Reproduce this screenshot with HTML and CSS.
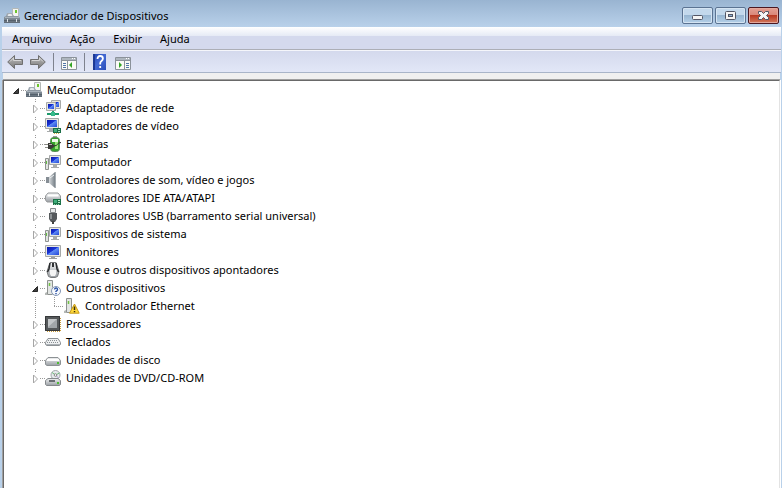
FILE: index.html
```html
<!DOCTYPE html>
<html lang="pt-BR">
<head>
    <meta charset="UTF-8">
    <meta name="viewport" content="width=device-width, initial-scale=1.0">
    <title>Gerenciador de Dispositivos</title>
    <link rel="stylesheet" href="styles.css">
</head>
<body>
    <!-- Icon definitions -->
    <svg class="defs" aria-hidden="true">
        <defs>
            <linearGradient id="metal" x1="0" y1="0" x2="0" y2="1">
                <stop offset="0" stop-color="#f2f3f4"/>
                <stop offset="1" stop-color="#9a9fa4"/>
            </linearGradient>
            <linearGradient id="steel" x1="0" y1="0" x2="0" y2="1">
                <stop offset="0" stop-color="#a9b2bb"/>
                <stop offset="1" stop-color="#5e6a75"/>
            </linearGradient>
            <linearGradient id="screen" x1="0" y1="0" x2="1" y2="1">
                <stop offset="0" stop-color="#0716a8"/>
                <stop offset="0.45" stop-color="#1b36d8"/>
                <stop offset="0.5" stop-color="#5f8cf4"/>
                <stop offset="1" stop-color="#2347d8"/>
            </linearGradient>
            <linearGradient id="arrow" x1="0" y1="0" x2="0" y2="1">
                <stop offset="0" stop-color="#c2c2c2"/>
                <stop offset="1" stop-color="#777"/>
            </linearGradient>
            <linearGradient id="cone" x1="0" y1="0" x2="1" y2="0">
                <stop offset="0" stop-color="#d5d9dc"/>
                <stop offset="1" stop-color="#69737b"/>
            </linearGradient>
            <linearGradient id="help" x1="0" y1="0" x2="1" y2="1">
                <stop offset="0" stop-color="#2145b4"/>
                <stop offset="0.5" stop-color="#4268d3"/>
                <stop offset="1" stop-color="#2a4db9"/>
            </linearGradient>
        </defs>
        <symbol id="i-manager" viewBox="0 0 16 16">
            <path d="M8.500.5h6v10h-6z" fill="#f4f5f2" stroke="#b4b8b6"/>
            <path d="M11 2h2v3h-2z" fill="#6cc52c"/>
            <path d="M3 5h5l2 3h4l2 2v5H0V9l2-1z" fill="url(#steel)"/>
            <path d="M3.500 8l1-2h3l1 2z" fill="#e7eaec"/>
            <path d="M1 9.500h14" stroke="#a9b3bc"/>
            <path d="M0 12.500h16" stroke="#55616c"/>
            <path d="M3 11h1v3H3zM12 11h1v3h-1z" fill="#dfe4e8"/>
        </symbol>
        <symbol id="i-network" viewBox="0 0 16 16">
            <path d="M6.500.5h9v8h-9z" fill="#e6e6e2" stroke="#a8aaa8"/>
            <path d="M8 2h6v5H8z" fill="url(#screen)"/>
            <path d="M1.500 2.500h9v8h-9z" fill="#e6e6e2" stroke="#a8aaa8"/>
            <path d="M3 4h6v5H3z" fill="url(#screen)"/>
            <path d="M7 11h2v2H7z" fill="#26a375"/>
            <path d="M2 14h12" stroke="#1d9a6c" stroke-width="2"/>
            <path d="M6 12h4v4H6z" fill="#35b98a"/>
        </symbol>
        <symbol id="i-display" viewBox="0 0 16 16">
            <path d="M.5.5h13v10H.5z" fill="#e8e8e3" stroke="#a5a8a8"/>
            <path d="M2 2h10v7H2z" fill="url(#screen)"/>
            <path d="M4 11h4v2h1v1H2v-1h2z" fill="#a8abab"/>
            <path d="M8 10h8v5H8z" fill="#1b6e47"/>
            <path d="M9 11h3v3H9z" fill="#3fae7a"/>
            <path d="M13 11h2v1h-2zM13 13h2v1h-2z" fill="#a8e0c0"/>
            <path d="M9 15.500h6" stroke="#d3b543" stroke-dasharray="1 1"/>
        </symbol>
        <symbol id="i-battery" viewBox="0 0 16 16">
            <path d="M8 0h4v2H8z" fill="#979b96"/>
            <rect x="5.500" y="1.500" width="9" height="14" rx="3" fill="#35a32c" stroke="#5c8a5c"/>
            <path d="M7 3h6v3H7z" fill="#eef8ea"/>
            <path d="M10 6h3v7h-3z" fill="#98e579"/>
            <path d="M0 8.500h3M0 11.500h3" stroke="#8b8b85"/>
            <path d="M3 7h3l3 2v2l-3 2H3z" fill="#393936"/>
            <path d="M4 8.500h3" stroke="#b4b4ae"/>
            <path d="M9 10c4 0 3-3.500 7-3.500" fill="none" stroke="#292927"/>
        </symbol>
        <symbol id="i-computer" viewBox="0 0 16 16">
            <path d="M.5 4.500h3v11h-3z" fill="#e2e4e2" stroke="#8f9391"/>
            <path d="M1 7h1v3H1z" fill="#63bd42"/>
            <path d="M4.500 1.500h11v9h-11z" fill="#e8e8e3" stroke="#a5a8a8"/>
            <path d="M6 3h8v6H6z" fill="url(#screen)"/>
            <path d="M8 11h4v2h2v1H6v-1h2z" fill="#a8abab"/>
        </symbol>
        <symbol id="i-sound" viewBox="0 0 16 16">
            <path d="M1 5h3v6H1z" fill="#858d94"/>
            <path d="M4 5l6-5h1v16h-1l-6-5z" fill="url(#cone)"/>
            <path d="M10.500 0v16" stroke="#a6adb2"/>
            <path d="M5 6l4-3" stroke="#edf0f2"/>
        </symbol>
        <symbol id="i-ide" viewBox="0 0 16 16">
            <path d="M3 3h10l2.500 3v4l-2 2H2L.5 10V6z" fill="url(#metal)" stroke="#96999b"/>
            <path d="M2.500 5.500h11" stroke="#fff" stroke-width="2"/>
            <path d="M8 9h8v6H8z" fill="#1b7148"/>
            <path d="M9 10h3v3H9z" fill="#3cad78"/>
            <path d="M13 10h2v1h-2zM13 12h2v1h-2z" fill="#b8ecc9"/>
            <path d="M9 14.500h6" stroke="#91cbaa" stroke-dasharray="1 1"/>
        </symbol>
        <symbol id="i-usb" viewBox="0 0 16 16">
            <path d="M5.500.5h5v4h-5z" fill="#e7e9ea" stroke="#85898c"/>
            <path d="M4 5h8v6l-2 3H6l-2-3z" fill="#55595c"/>
            <path d="M5 6h2v5H5z" fill="#8c9194"/>
            <path d="M8 13v3" stroke="#444" stroke-width="2"/>
        </symbol>
        <symbol id="i-monitor" viewBox="0 0 16 16">
            <path d="M.5 1.500h15v11H.5z" fill="#e8e8e3" stroke="#a5a8a8"/>
            <path d="M2 3h12v8H2z" fill="url(#screen)"/>
            <path d="M6 13h4v1h2v1H4v-1h2z" fill="#9da0a0"/>
        </symbol>
        <symbol id="i-mouse" viewBox="0 0 16 16">
            <path d="M5 .5h6l3 9-1.500 5-2.500 1H6l-2.500-1L2 9.500z" fill="url(#metal)" stroke="#77797b"/>
            <path d="M5 1L4 7l-1.500 3M11 1l1 6 1.500 3" fill="none" stroke="#292b2d" stroke-width="1.500"/>
            <path d="M7 1h2v4H7z" fill="#303234"/>
            <path d="M5 8h6v4l-1 2H6l-1-2z" fill="#f4f4f4"/>
        </symbol>
        <symbol id="i-unknown" viewBox="0 0 16 16">
            <path d="M2.500.5h5v14h-5z" fill="#e2e5e3" stroke="#8e9290"/>
            <path d="M4.500 3v3" stroke="#70c343" stroke-width="1.500"/>
            <path d="M0 13l2-1v3H0zM7 7h2v8H7z" fill="#b4b8b6"/>
            <circle cx="11" cy="11" r="4.500" fill="#f6f9fd" stroke="#8295b4"/>
            <path d="M9.500 9.500q.2-1.500 1.600-1.500T12.500 9.500q0 1-1.500 1.800v.7M11 13v1.300" fill="none" stroke="#2850a5" stroke-width="1.400"/>
        </symbol>
        <symbol id="i-warning" viewBox="0 0 16 16">
            <path d="M2.500.5h5v14h-5z" fill="#e2e5e3" stroke="#8e9290"/>
            <path d="M4.500 3v3" stroke="#70c343" stroke-width="1.500"/>
            <path d="M0 13l2-1v3H0z" fill="#b4b8b6"/>
            <path d="M10.500 6l4.700 9.200H5.500z" fill="#ffd83b" stroke="#c79a17" stroke-linejoin="round"/>
            <path d="M10.500 8.500v3.500M10.500 13v1.300" stroke="#3a2d08" stroke-width="1.500"/>
        </symbol>
        <symbol id="i-cpu" viewBox="0 0 16 16">
            <path d="M2 15.500h14M15.500 2v14" stroke="#c99b3c" stroke-dasharray="1 1"/>
            <path d="M0 0h15v15H0z" fill="#55585a"/>
            <path d="M.5 .5h14v14H.5z" fill="none" stroke="#36383a"/>
            <path d="M3 3h9v9H3z" fill="#a2a6a9"/>
            <path d="M3 3h9l-9 8z" fill="#c4c7c9"/>
        </symbol>
        <symbol id="i-keyboard" viewBox="0 0 16 16">
            <path d="M3 4.500h10l2.500 4v2l-1 1h-13l-1-1v-2z" fill="#eef0f1" stroke="#8c9195"/>
            <path d="M3 6.500h10M2 8.500h12" stroke="#8a9095" stroke-dasharray="1 1"/>
            <path d="M1 10.500h14" stroke="#aab0b5"/>
        </symbol>
        <symbol id="i-disk" viewBox="0 0 16 16">
            <path d="M3 5.500h10l2.500 3v4l-1.500 1H2l-1.500-1v-4z" fill="url(#metal)" stroke="#8c9194"/>
            <path d="M2 8h12" stroke="#fff" stroke-width="2"/>
            <path d="M12 10h2v2h-2z" fill="#4dbb35"/>
        </symbol>
        <symbol id="i-dvd" viewBox="0 0 16 16">
            <circle cx="10.500" cy="5" r="4.500" fill="#e6eaec" stroke="#a1a7ab"/>
            <path d="M10.500 5L7 2.500M10.500 5l4-2" stroke="#6fbf7b"/>
            <path d="M10.500 5l3 3" stroke="#b29ad0"/>
            <circle cx="10.500" cy="5" r="1.300" fill="#fff" stroke="#888"/>
            <path d="M3 8.500h10l2.500 2v4l-1 1h-13l-1-1v-4z" fill="url(#metal)" stroke="#85898c"/>
            <path d="M4 11h6" stroke="#696e72" stroke-width="2"/>
            <path d="M12 12h2v2h-2z" fill="#4dbb35"/>
        </symbol>
        <symbol id="i-closed" viewBox="0 0 16 18">
            <path d="M6.500 6l4 4-4 4z" fill="#fff" stroke="#a6a6a6"/>
        </symbol>
        <symbol id="i-open" viewBox="0 0 16 18">
            <path d="M10.500 7.500v5h-5z" fill="#404040" stroke="#262626"/>
        </symbol>
    </svg>

    <div class="window">
        <header class="titlebar">
            <svg class="icon"><use href="#i-manager"/></svg>
            <h1>Gerenciador de Dispositivos</h1>
            <div class="controls">
                <button class="control" aria-label="Minimizar">
                    <svg viewBox="0 0 29 15"><rect x="9.500" y="7.500" width="10" height="4" rx="1" fill="#f5f5f5" stroke="#535666"/></svg>
                </button>
                <button class="control" aria-label="Maximizar">
                    <svg viewBox="0 0 29 15"><rect x="9.500" y="3.500" width="10" height="8" rx="1" fill="#f5f5f5" stroke="#535666"/><rect x="12.500" y="6.500" width="4" height="2" fill="#8ab0d0" stroke="#535666"/></svg>
                </button>
                <button class="control close" aria-label="Fechar">
                    <svg viewBox="0 0 29 15"><path d="M9.500 3.500h3l2 2 2-2h3v2l-2 2 2 2v2h-3l-2-2-2 2h-3v-2l2-2-2-2z" fill="#f5f5f5" stroke="#535666"/></svg>
                </button>
            </div>
        </header>

        <nav class="menubar">
            <button>Arquivo</button>
            <button>Ação</button>
            <button>Exibir</button>
            <button>Ajuda</button>
        </nav>

        <div class="toolbar">
            <button aria-label="Voltar">
                <svg class="icon" viewBox="0 0 16 16"><path d="M.7 8l6.800-6.500v4h8v5h-8v4z" fill="url(#arrow)" stroke="#707070"/><path d="M3 7.500l3.500-3.500v2.500H14" fill="none" stroke="#d5d5d5"/></svg>
            </button>
            <button aria-label="Avançar">
                <svg class="icon" viewBox="0 0 16 16"><path d="M15.300 8L8.500 1.500v4h-8v5h8v4z" fill="url(#arrow)" stroke="#707070"/><path d="M2 6.500h7.500V4l3.500 3.500" fill="none" stroke="#d5d5d5"/></svg>
            </button>
            <span class="separator"></span>
            <button aria-label="Mostrar árvore de console">
                <svg class="icon" viewBox="0 0 16 16"><path d="M.5 3.500h15v12H.5z" fill="#fafaf6" stroke="#8b929a"/><path d="M1 4h14v2H1z" fill="#aeb6be"/><path d="M1 6.500h14M6.500 7v8" stroke="#8b929a"/><path d="M11 4.500h1M13 4.500h1" stroke="#fff"/><path d="M2 9.500h3M2 11.500h3M2 13.500h3" stroke="#5276a8"/><path d="M11 8v6l-3-3z" fill="#35a526"/></svg>
            </button>
            <span class="separator"></span>
            <button aria-label="Ajuda">
                <svg class="icon" viewBox="0 0 16 16"><path d="M1 0h13v16H1z" fill="url(#help)"/><path d="M1 0h2v16H1z" fill="#1c3995"/><path d="M5.500 5q0-3 2.700-3t2.700 2.500q0 1.500-1.400 2.500T8.200 9.500v1M8.200 12v2" fill="none" stroke="#fff" stroke-width="1.800"/></svg>
            </button>
            <button aria-label="Mostrar painel de ações">
                <svg class="icon" viewBox="0 0 16 16"><path d="M.5 3.500h15v12H.5z" fill="#fafaf6" stroke="#8b929a"/><path d="M1 4h14v2H1z" fill="#aeb6be"/><path d="M1 6.500h14M9.500 7v8" stroke="#8b929a"/><path d="M11 4.500h1M13 4.500h1" stroke="#fff"/><path d="M11 9.500h3M11 11.500h3M11 13.500h3" stroke="#5276a8"/><path d="M4 8v6l3-3z" fill="#35a526"/></svg>
            </button>
        </div>

        <main class="tree">
            <div class="row root">
                <button class="toggle" aria-label="Recolher"><svg><use href="#i-open"/></svg></button>
                <svg class="icon"><use href="#i-manager"/></svg>
                <span>MeuComputador</span>
            </div>
            <ul class="devices">
                <li class="row"><button class="toggle" aria-label="Expandir"><svg><use href="#i-closed"/></svg></button><svg class="icon"><use href="#i-network"/></svg><span>Adaptadores de rede</span></li>
                <li class="row"><button class="toggle" aria-label="Expandir"><svg><use href="#i-closed"/></svg></button><svg class="icon"><use href="#i-display"/></svg><span>Adaptadores de vídeo</span></li>
                <li class="row"><button class="toggle" aria-label="Expandir"><svg><use href="#i-closed"/></svg></button><svg class="icon"><use href="#i-battery"/></svg><span>Baterias</span></li>
                <li class="row"><button class="toggle" aria-label="Expandir"><svg><use href="#i-closed"/></svg></button><svg class="icon"><use href="#i-computer"/></svg><span>Computador</span></li>
                <li class="row"><button class="toggle" aria-label="Expandir"><svg><use href="#i-closed"/></svg></button><svg class="icon"><use href="#i-sound"/></svg><span>Controladores de som, vídeo e jogos</span></li>
                <li class="row"><button class="toggle" aria-label="Expandir"><svg><use href="#i-closed"/></svg></button><svg class="icon"><use href="#i-ide"/></svg><span>Controladores IDE ATA/ATAPI</span></li>
                <li class="row"><button class="toggle" aria-label="Expandir"><svg><use href="#i-closed"/></svg></button><svg class="icon"><use href="#i-usb"/></svg><span>Controladores USB (barramento serial universal)</span></li>
                <li class="row"><button class="toggle" aria-label="Expandir"><svg><use href="#i-closed"/></svg></button><svg class="icon"><use href="#i-computer"/></svg><span>Dispositivos de sistema</span></li>
                <li class="row"><button class="toggle" aria-label="Expandir"><svg><use href="#i-closed"/></svg></button><svg class="icon"><use href="#i-monitor"/></svg><span>Monitores</span></li>
                <li class="row"><button class="toggle" aria-label="Expandir"><svg><use href="#i-closed"/></svg></button><svg class="icon"><use href="#i-mouse"/></svg><span>Mouse e outros dispositivos apontadores</span></li>
                <li>
                    <div class="row"><button class="toggle" aria-label="Recolher"><svg><use href="#i-open"/></svg></button><svg class="icon"><use href="#i-unknown"/></svg><span>Outros dispositivos</span></div>
                    <ul class="children">
                        <li class="row"><i class="branch"></i><svg class="icon"><use href="#i-warning"/></svg><span>Controlador Ethernet</span></li>
                    </ul>
                </li>
                <li class="row"><button class="toggle" aria-label="Expandir"><svg><use href="#i-closed"/></svg></button><svg class="icon"><use href="#i-cpu"/></svg><span>Processadores</span></li>
                <li class="row"><button class="toggle" aria-label="Expandir"><svg><use href="#i-closed"/></svg></button><svg class="icon"><use href="#i-keyboard"/></svg><span>Teclados</span></li>
                <li class="row"><button class="toggle" aria-label="Expandir"><svg><use href="#i-closed"/></svg></button><svg class="icon"><use href="#i-disk"/></svg><span>Unidades de disco</span></li>
                <li class="row"><button class="toggle" aria-label="Expandir"><svg><use href="#i-closed"/></svg></button><svg class="icon"><use href="#i-dvd"/></svg><span>Unidades de DVD/CD-ROM</span></li>
            </ul>
        </main>
    </div>
</body>
</html>
```

FILE: styles.css
```css
* {
    box-sizing: border-box;
}
body {
    margin: 0;
    font-family: "Noto Sans", "Open Sans", sans-serif;
    font-size: 11px;
    line-height: 18px;
    color: #000;
}
button {
    padding: 0;
    border: none;
    background: none;
    font: inherit;
    color: inherit;
}
ul {
    margin: 0;
    padding: 0;
    list-style: none;
}
.defs {
    position: absolute;
    width: 0;
    height: 0;
}
.icon {
    display: block;
    flex: none;
    width: 16px;
    height: 16px;
}
.window {
    display: flex;
    flex-direction: column;
    min-height: 100vh;
    padding: 0 1px 0 2px;
    background: #b9d1ea linear-gradient(#99b4d1, #b9d1ea) top / 100% 27px no-repeat;
}

/* Title bar */
.titlebar {
    display: flex;
    align-items: center;
    height: 27px;
    padding: 4px 2px 0;
}
.titlebar h1 {
    flex: 1;
    margin: 0 0 0 4px;
    font-size: 11px;
    font-weight: normal;
}
.controls {
    display: flex;
    gap: 2px;
}
.control {
    width: 31px;
    height: 17px;
    border: 1px solid #5b7392;
    border-radius: 2px;
    box-shadow: inset 0 0 0 1px #d5e4f2;
    background: linear-gradient(#c3d8ec 50%, #98b6d2 50%, #b5d0e8);
}
.control svg {
    display: block;
    width: 29px;
    height: 15px;
}
.control.close {
    border-color: #4b1720;
    box-shadow: inset 0 0 0 1px #e4a79b;
    background: linear-gradient(#e3a094, #d98577 50%, #b83a24 50%, #d27a5c);
}

/* Menu and toolbar */
.menubar {
    display: flex;
    height: 23px;
    padding: 2px 1px 0;
    border-bottom: 1px solid #acaeb6;
    background: linear-gradient(#fff, #e5eaf5 9px, #d4d9ed 9px);
}
.menubar button {
    padding: 0 9px;
}
.toolbar {
    display: flex;
    align-items: center;
    gap: 7px;
    height: 23px;
    padding: 0 5px;
    border-top: 1px solid #f5f6fb;
    border-bottom: 1px solid #a9b5c9;
    background: linear-gradient(#d4d9ed, #e2e7f7);
}
.separator {
    width: 1px;
    height: 18px;
    background: #7e828e;
}

/* Device tree */
.tree {
    flex: 1;
    margin: 7px 1px 0;
    padding-left: 4px;
    border: 1px solid #696969;
    border-width: 1px 1px 0;
    border-right-color: #e3e3e3;
    background: #fff;
    box-shadow: 0 -1px #a0a0a0, 0 -7px #f0f0f0, 1px 0 #fff, -1px 0 #a0a0a0;
}
.row {
    display: flex;
    align-items: center;
    height: 18px;
}
.row span {
    margin-left: 5px;
    white-space: nowrap;
}
.toggle {
    flex: none;
    width: 18px;
    height: 18px;
    background: repeating-linear-gradient(90deg, #999 0 1px, transparent 1px 2px) right 9px / 5px 1px no-repeat;
}
.toggle svg {
    display: block;
    width: 16px;
    height: 18px;
}
.devices {
    padding-left: 19px;
}
.devices .toggle {
    background:
        repeating-linear-gradient(90deg, #999 0 1px, transparent 1px 2px) right 9px / 5px 1px no-repeat,
        repeating-linear-gradient(#999 0 1px, transparent 1px 2px) 8px 0 / 1px 4px no-repeat;
}
.children {
    padding-left: 8px;
    background: repeating-linear-gradient(#999 0 1px, transparent 1px 2px) 8px 0 / 1px 100% no-repeat;
}
.branch {
    width: 29px;
    height: 18px;
    background:
        repeating-linear-gradient(90deg, #999 0 1px, transparent 1px 2px) 19px 9px / 10px 1px no-repeat,
        repeating-linear-gradient(#999 0 1px, transparent 1px 2px) 19px 0 / 1px 10px no-repeat;
}
```
